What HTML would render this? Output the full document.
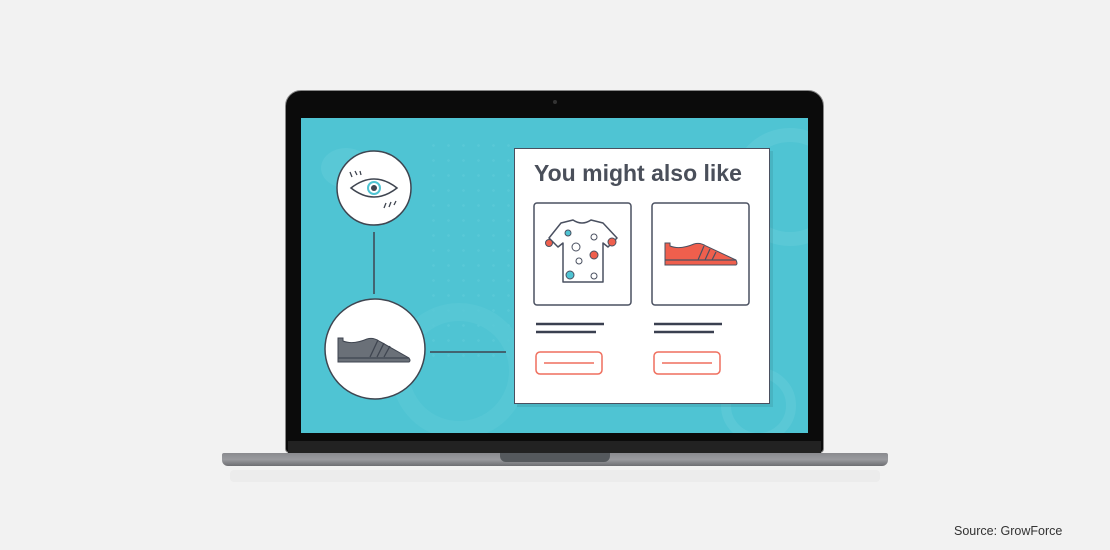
<!DOCTYPE html>
<html><head><style>
body{margin:0;width:1110px;height:550px;background:#f2f2f2;position:relative;overflow:hidden;font-family:"Liberation Sans",sans-serif}
.a{position:absolute}
</style></head><body>
<div class="a" style="left:285px;top:90px;width:539px;height:363px;background:#0b0b0b;border-radius:16px 16px 4px 4px;border:1px solid #888;box-sizing:border-box"></div>
<div class="a" style="left:553px;top:100px;width:4px;height:4px;border-radius:50%;background:#333"></div>
<div class="a" style="left:288px;top:441px;width:533px;height:12px;background:#222"></div>
<div class="a" style="left:301px;top:118px;width:507px;height:315px;background:#4fc4d3;overflow:hidden">
 <div class="a" style="left:430px;top:10px;width:90px;height:90px;border-radius:50%;border:14px solid #5ac8d6"></div>
 <div class="a" style="left:420px;top:250px;width:55px;height:55px;border-radius:50%;border:10px solid #5ac8d6"></div>
 <div class="a" style="left:20px;top:30px;width:50px;height:40px;border-radius:50%;background:#59c8d6"></div>
 <div class="a" style="left:90px;top:185px;width:100px;height:100px;border-radius:50%;border:18px solid #56c7d5"></div>
 <div class="a" style="left:125px;top:20px;width:90px;height:230px;background-image:radial-gradient(#58c8d6 1.2px,transparent 1.5px);background-size:15px 15px"></div>
</div>
<div class="a" style="left:222px;top:453px;width:666px;height:13px;background:linear-gradient(#8a8b8f,#9a9b9f 50%,#6d6e72);border-radius:2px 2px 6px 6px"></div>
<div class="a" style="left:500px;top:453px;width:110px;height:9px;background:#55595d;border-radius:0 0 6px 6px"></div>
<div class="a" style="left:230px;top:470px;width:650px;height:12px;background:#ececec;border-radius:4px"></div>
<svg class="a" style="left:0;top:0" width="1110" height="550">
 <line x1="374" y1="232" x2="374" y2="294" stroke="#3f4550" stroke-width="1.5"/>
 <line x1="430" y1="352" x2="506" y2="352" stroke="#3f4550" stroke-width="1.5"/>
 <circle cx="374" cy="188" r="37" fill="#fff" stroke="#3f4550" stroke-width="1.5"/>
 <path d="M351 188 Q374 170 397 188 Q374 206 351 188Z" fill="none" stroke="#3f4550" stroke-width="1.5"/>
 <circle cx="374" cy="188" r="6" fill="none" stroke="#4fc4d3" stroke-width="2"/>
 <circle cx="374" cy="188" r="3" fill="#3f4550"/>
 <path d="M350 172l2 5M355 171l2 4M360 171l1 4M386 203l-2 5M391 202l-2 5M396 201l-2 4" stroke="#3f4550" stroke-width="1.3"/>
 <circle cx="375" cy="349" r="50" fill="#fff" stroke="#3f4550" stroke-width="1.5"/>
 <path d="M338 338h5v3q10 4 24-2q6-2 12 2l30 17q2 3 0 4h-71z" fill="#6a7078" stroke="#3f4550" stroke-width="1"/>
 <path d="M338 358h71M378 340l-8 17M384 343l-7 14M390 346l-6 11" stroke="#3f4550" stroke-width="1.3"/>
</svg>
<div class="a" style="left:514px;top:148px;width:256px;height:256px;background:#fff;border:1.5px solid #4a5060;box-sizing:border-box;box-shadow:3px 3px 0 rgba(0,0,0,.08)"></div>
<div class="a" style="left:534px;top:160px;font-size:23px;font-weight:bold;color:#4a4f5a;white-space:nowrap">You might also like</div>
<svg class="a" style="left:0;top:0" width="1110" height="550">
 <rect x="534" y="203" width="97" height="102" rx="3" fill="none" stroke="#4a5060" stroke-width="1.5"/>
 <rect x="652" y="203" width="97" height="102" rx="3" fill="none" stroke="#4a5060" stroke-width="1.5"/>
 <path d="M561 223l12-3q9 6 18 0l12 3l14 15l-9 9l-5-4v39h-40v-39l-5 4l-9-9z" fill="#fff" stroke="#4a5060" stroke-width="1.5" stroke-linejoin="round"/>
 <circle cx="568" cy="233" r="3" fill="#4fc4d3" stroke="#4a5060"/><circle cx="594" cy="237" r="3" fill="#fff" stroke="#4a5060"/>
 <circle cx="549" cy="243" r="3.5" fill="#ef5f4d" stroke="#4a5060"/><circle cx="612" cy="242" r="4" fill="#ef5f4d" stroke="#4a5060"/>
 <circle cx="576" cy="247" r="4" fill="#fff" stroke="#4a5060"/><circle cx="594" cy="255" r="4" fill="#ef5f4d" stroke="#4a5060"/>
 <circle cx="579" cy="261" r="3" fill="#fff" stroke="#4a5060"/><circle cx="570" cy="275" r="4" fill="#4fc4d3" stroke="#4a5060"/>
 <circle cx="594" cy="276" r="3" fill="#fff" stroke="#4a5060"/>
 <path d="M665 243h5v3q10 4 24-2q6-2 12 2l30 14q2 4 0 5h-71z" fill="#ef5f4d" stroke="#4a5060" stroke-width="1"/>
 <path d="M665 260h71M704 246l-6 14M710 249l-5 11M716 252l-4 8" stroke="#4a5060" stroke-width="1.2"/>
 <path d="M536 324h68M536 332h60M654 324h68M654 332h60" stroke="#3a4050" stroke-width="2.5"/>
 <rect x="536" y="352" width="66" height="22" rx="4" fill="none" stroke="#ef6f5e" stroke-width="1.5"/>
 <rect x="654" y="352" width="66" height="22" rx="4" fill="none" stroke="#ef6f5e" stroke-width="1.5"/>
 <path d="M544 363h50M662 363h50" stroke="#ef6f5e" stroke-width="1.5"/>
</svg>
<div class="a" style="left:954px;top:524px;font-size:12.5px;color:#333">Source: GrowForce</div>
</body></html>
